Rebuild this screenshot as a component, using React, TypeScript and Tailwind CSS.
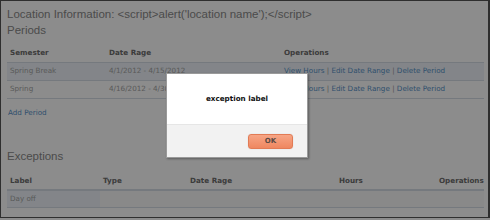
import React from 'react';

const periods = [
    { semester: 'Spring Break', range: '4/1/2012 - 4/15/2012', active: true },
    { semester: 'Spring', range: '4/16/2012 - 4/30/2012', active: false },
];

const PeriodLinks: React.FC = () => (
    <span className="text-[#5792c8]">
        View Hours <span className="text-[#9a9a9a]">|</span> Edit Date Range <span className="text-[#9a9a9a]">|</span> Delete Period
    </span>
);

export default function App() {
    return (
        <div className="w-[490px] h-[220px] bg-white relative overflow-hidden" style={{ fontFamily: '"DejaVu Sans", Verdana, sans-serif' }}>
            <div className="h-[218px] border border-[#555] border-r-2 px-[6px] pt-[6px]">
                <h1 className="text-[11.5px] leading-[15px] text-[#8a8a8a]" style={{ fontFamily: '"Liberation Sans", Arial, sans-serif' }}>
                    Location Information: &lt;script&gt;alert('location name');&lt;/script&gt;
                </h1>
                <h2 className="text-[11.5px] leading-[15px] text-[#8a8a8a] mt-px" style={{ fontFamily: '"Liberation Sans", Arial, sans-serif' }}>
                    Periods
                </h2>

                <table className="w-[477px] mt-[8px] text-[7.2px] table-fixed border-collapse">
                    <colgroup>
                        <col className="w-[99px]" />
                        <col className="w-[175px]" />
                        <col />
                    </colgroup>
                    <thead>
                        <tr className="h-[16px] border-b border-[#d5dde6] text-left text-[#6d6d6d]">
                            <th className="pl-[3px] font-bold">Semester</th>
                            <th className="pl-[3px] font-bold">Date Rage</th>
                            <th className="pl-[3px] font-bold">Operations</th>
                        </tr>
                    </thead>
                    <tbody>
                        {periods.map((p) => (
                            <tr key={p.semester} className={`h-[18px] border-b border-[#d5dde6] text-[#a4a4a4] ${p.active ? 'bg-[#eef3f9]' : ''}`}>
                                <td className="pl-[3px]">{p.semester}</td>
                                <td className="pl-[3px]">{p.range}</td>
                                <td className="pl-[3px]"><PeriodLinks /></td>
                            </tr>
                        ))}
                    </tbody>
                </table>

                <div className="mt-[9px] pl-[1px] text-[7.2px] text-[#5792c8]">Add Period</div>

                <h2 className="mt-[31px] text-[11.5px] leading-[15px] text-[#8a8a8a]" style={{ fontFamily: '"Liberation Sans", Arial, sans-serif' }}>
                    Exceptions
                </h2>

                <table className="w-[477px] mt-[10px] text-[7.2px] table-fixed border-collapse">
                    <colgroup>
                        <col className="w-[93px]" />
                        <col className="w-[87px]" />
                        <col className="w-[149px]" />
                        <col className="w-[100px]" />
                        <col />
                    </colgroup>
                    <thead>
                        <tr className="h-[16px] border-b-2 border-[#d5dde6] text-left text-[#6d6d6d]">
                            <th className="pl-[3px] font-bold">Label</th>
                            <th className="pl-[3px] font-bold">Type</th>
                            <th className="pl-[3px] font-bold">Date Rage</th>
                            <th className="pl-[3px] font-bold">Hours</th>
                            <th className="pl-[3px] font-bold">Operations</th>
                        </tr>
                    </thead>
                    <tbody>
                        <tr className="h-[17px] border-b border-[#d5dde6] text-[#a4a4a4]">
                            <td className="pl-[3px] bg-[#eef3f9]">Day off</td>
                            <td className="bg-[#fafafa]"></td>
                            <td className="bg-[#fafafa]"></td>
                            <td className="bg-[#fafafa]"></td>
                            <td className="bg-[#fafafa]"></td>
                        </tr>
                    </tbody>
                </table>
            </div>

            {/* modal overlay */}
            <div className="absolute inset-0 bg-black/45" />

            <div className="absolute left-[166px] top-[73px] w-[142px] h-[85px] flex flex-col border border-[#9a9a9a] shadow-[1px_1px_2px_rgba(0,0,0,0.35)]">
                <div className="h-[50px] bg-white flex items-center justify-center">
                    <span className="text-[7.2px] font-bold text-[#111]">exception label</span>
                </div>
                <div className="flex-1 bg-[#f2f2f2] border-t border-[#e6e6e6] flex items-center justify-end pr-[14px]">
                    <button
                        type="button"
                        className="w-[45px] h-[15px] rounded-[3px] border border-[#e27b55] bg-gradient-to-b from-[#f6a585] to-[#ef8760] text-[7px] font-bold text-[#5a4a44] shadow-[0_0_1px_rgba(0,0,0,0.2)]"
                    >
                        OK
                    </button>
                </div>
            </div>
        </div>
    );
}
